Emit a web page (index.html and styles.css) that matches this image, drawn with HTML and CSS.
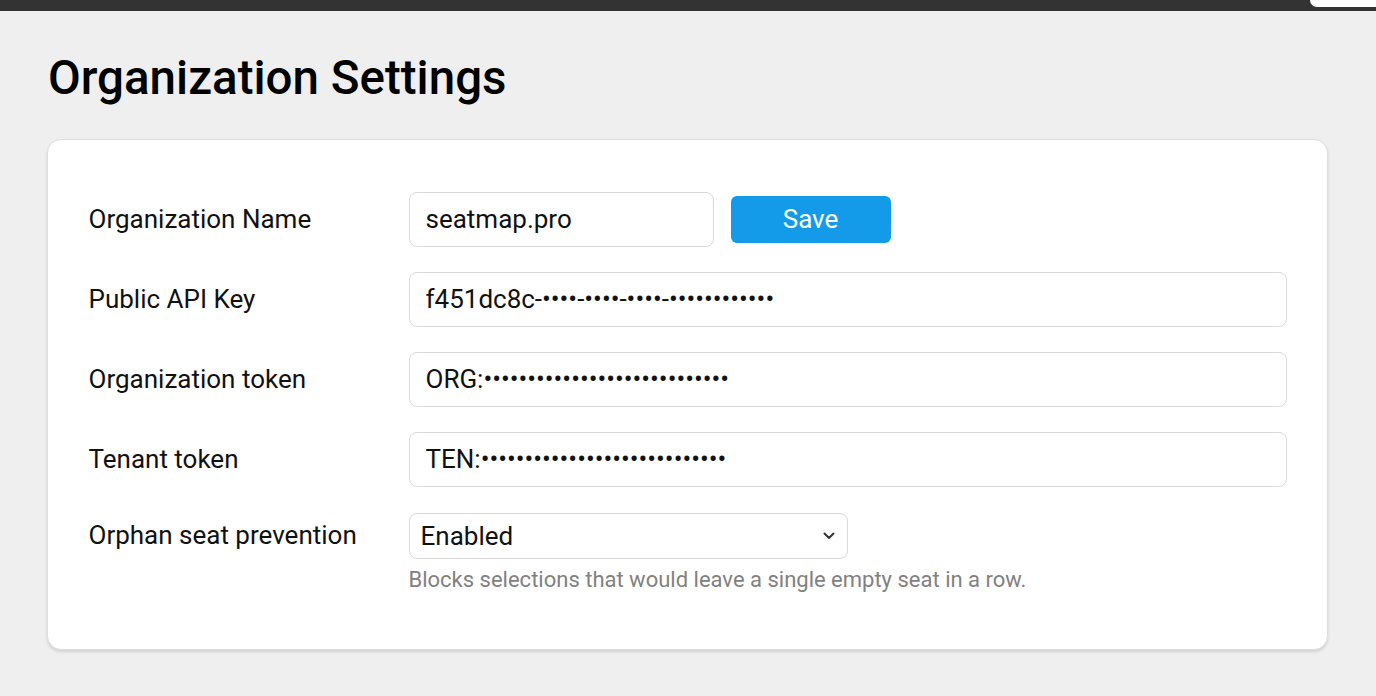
FILE: index.html
```html
<!DOCTYPE html>
<html lang="en">
<head>
<meta charset="utf-8">
<title>Organization Settings</title>
<link rel="stylesheet" href="styles.css">
</head>
<body>
<div class="topbar"><div class="tab"></div></div>
<main class="page">
  <h1 class="title">Organization Settings</h1>
  <section class="card">
    <div class="row">
      <div class="label">Organization Name</div>
      <div class="control inline">
        <input class="field short" type="text" value="seatmap.pro">
        <button class="btn">Save</button>
      </div>
    </div>
    <div class="row">
      <div class="label">Public API Key</div>
      <div class="control">
        <input class="field" type="text" value="f451dc8c-••••-••••-••••-••••••••••••" readonly>
      </div>
    </div>
    <div class="row">
      <div class="label">Organization token</div>
      <div class="control">
        <input class="field" type="text" value="ORG:••••••••••••••••••••••••••••" readonly>
      </div>
    </div>
    <div class="row">
      <div class="label">Tenant token</div>
      <div class="control">
        <input class="field" type="text" value="TEN:••••••••••••••••••••••••••••" readonly>
      </div>
    </div>
    <div class="row">
      <div class="label label-select">Orphan seat prevention</div>
      <div class="control">
        <div class="select-wrap">
          <select class="select">
            <option>Enabled</option>
            <option>Disabled</option>
          </select>
          <svg class="chevron" width="12" height="8" viewBox="0 0 12 8"><path d="M1.5 1.5 L6 6 L10.5 1.5" fill="none" stroke="#333" stroke-width="2" stroke-linecap="round" stroke-linejoin="round"/></svg>
        </div>
        <div class="help">Blocks selections that would leave a single empty seat in a row.</div>
      </div>
    </div>
  </section>
</main>
</body>
</html>
```
FILE: styles.css
```css
* { box-sizing: border-box; }
html, body { margin: 0; padding: 0; }
body {
  background: #efefef;
  font-family: Roboto, "Liberation Sans", Arial, sans-serif;
  color: #111;
  width: 1376px;
  height: 696px;
  overflow: hidden;
}
.topbar {
  height: 11px;
  background: #333333;
  position: relative;
}
.tab {
  position: absolute;
  right: 0;
  top: 0;
  width: 66px;
  height: 7px;
  background: #ffffff;
  border-bottom-left-radius: 7px;
}
.page {
  padding: 0 48px 0 47px;
}
.title {
  margin: 39px 0 33px 1px;
  font-size: 47.5px;
  line-height: 56px;
  font-weight: 500;
  color: #000;
}
.card {
  background: #fff;
  border: 1.5px solid #dedede;
  border-radius: 14px;
  box-shadow: 0 2px 3px rgba(0,0,0,0.12);
  padding: 51.5px 40.5px 53px 40.5px;
  display: flex;
  flex-direction: column;
  gap: 25px;
}
.row {
  display: flex;
  align-items: flex-start;
}
.label {
  width: 320px;
  flex: none;
  height: 55px;
  display: flex;
  align-items: center;
  font-size: 26px;
  color: #111;
}
.label-select { height: 46px; }
.control {
  flex: 1;
  min-width: 0;
}
.control.inline {
  display: flex;
  align-items: center;
  gap: 17px;
}
.field {
  display: block;
  width: 100%;
  height: 55px;
  border: 1.5px solid #d9d9d9;
  border-radius: 8px;
  padding: 0 16px;
  font-family: Roboto, "Liberation Sans", Arial, sans-serif;
  font-size: 26px;
  color: #111;
  background: #fff;
  outline: none;
}
.field.short { width: 305px; }
.btn {
  width: 160px;
  height: 47px;
  border: none;
  border-radius: 6px;
  background: #139bea;
  color: #fff;
  font-family: Roboto, "Liberation Sans", Arial, sans-serif;
  font-size: 26px;
  padding: 0;
  cursor: pointer;
}
.select-wrap {
  position: relative;
  width: 439px;
  margin-top: 1px;
}
.select {
  display: block;
  width: 100%;
  height: 46px;
  border: 1.5px solid #d9d9d9;
  border-radius: 8px;
  padding: 0 11px;
  font-family: Roboto, "Liberation Sans", Arial, sans-serif;
  font-size: 26px;
  color: #111;
  background: #fff;
  appearance: none;
  -webkit-appearance: none;
  outline: none;
}
.chevron {
  position: absolute;
  right: 13px;
  top: 19px;
  pointer-events: none;
}
.help {
  margin-top: 4px;
  font-size: 22px;
  line-height: 33px;
  color: #818181;
}
```
